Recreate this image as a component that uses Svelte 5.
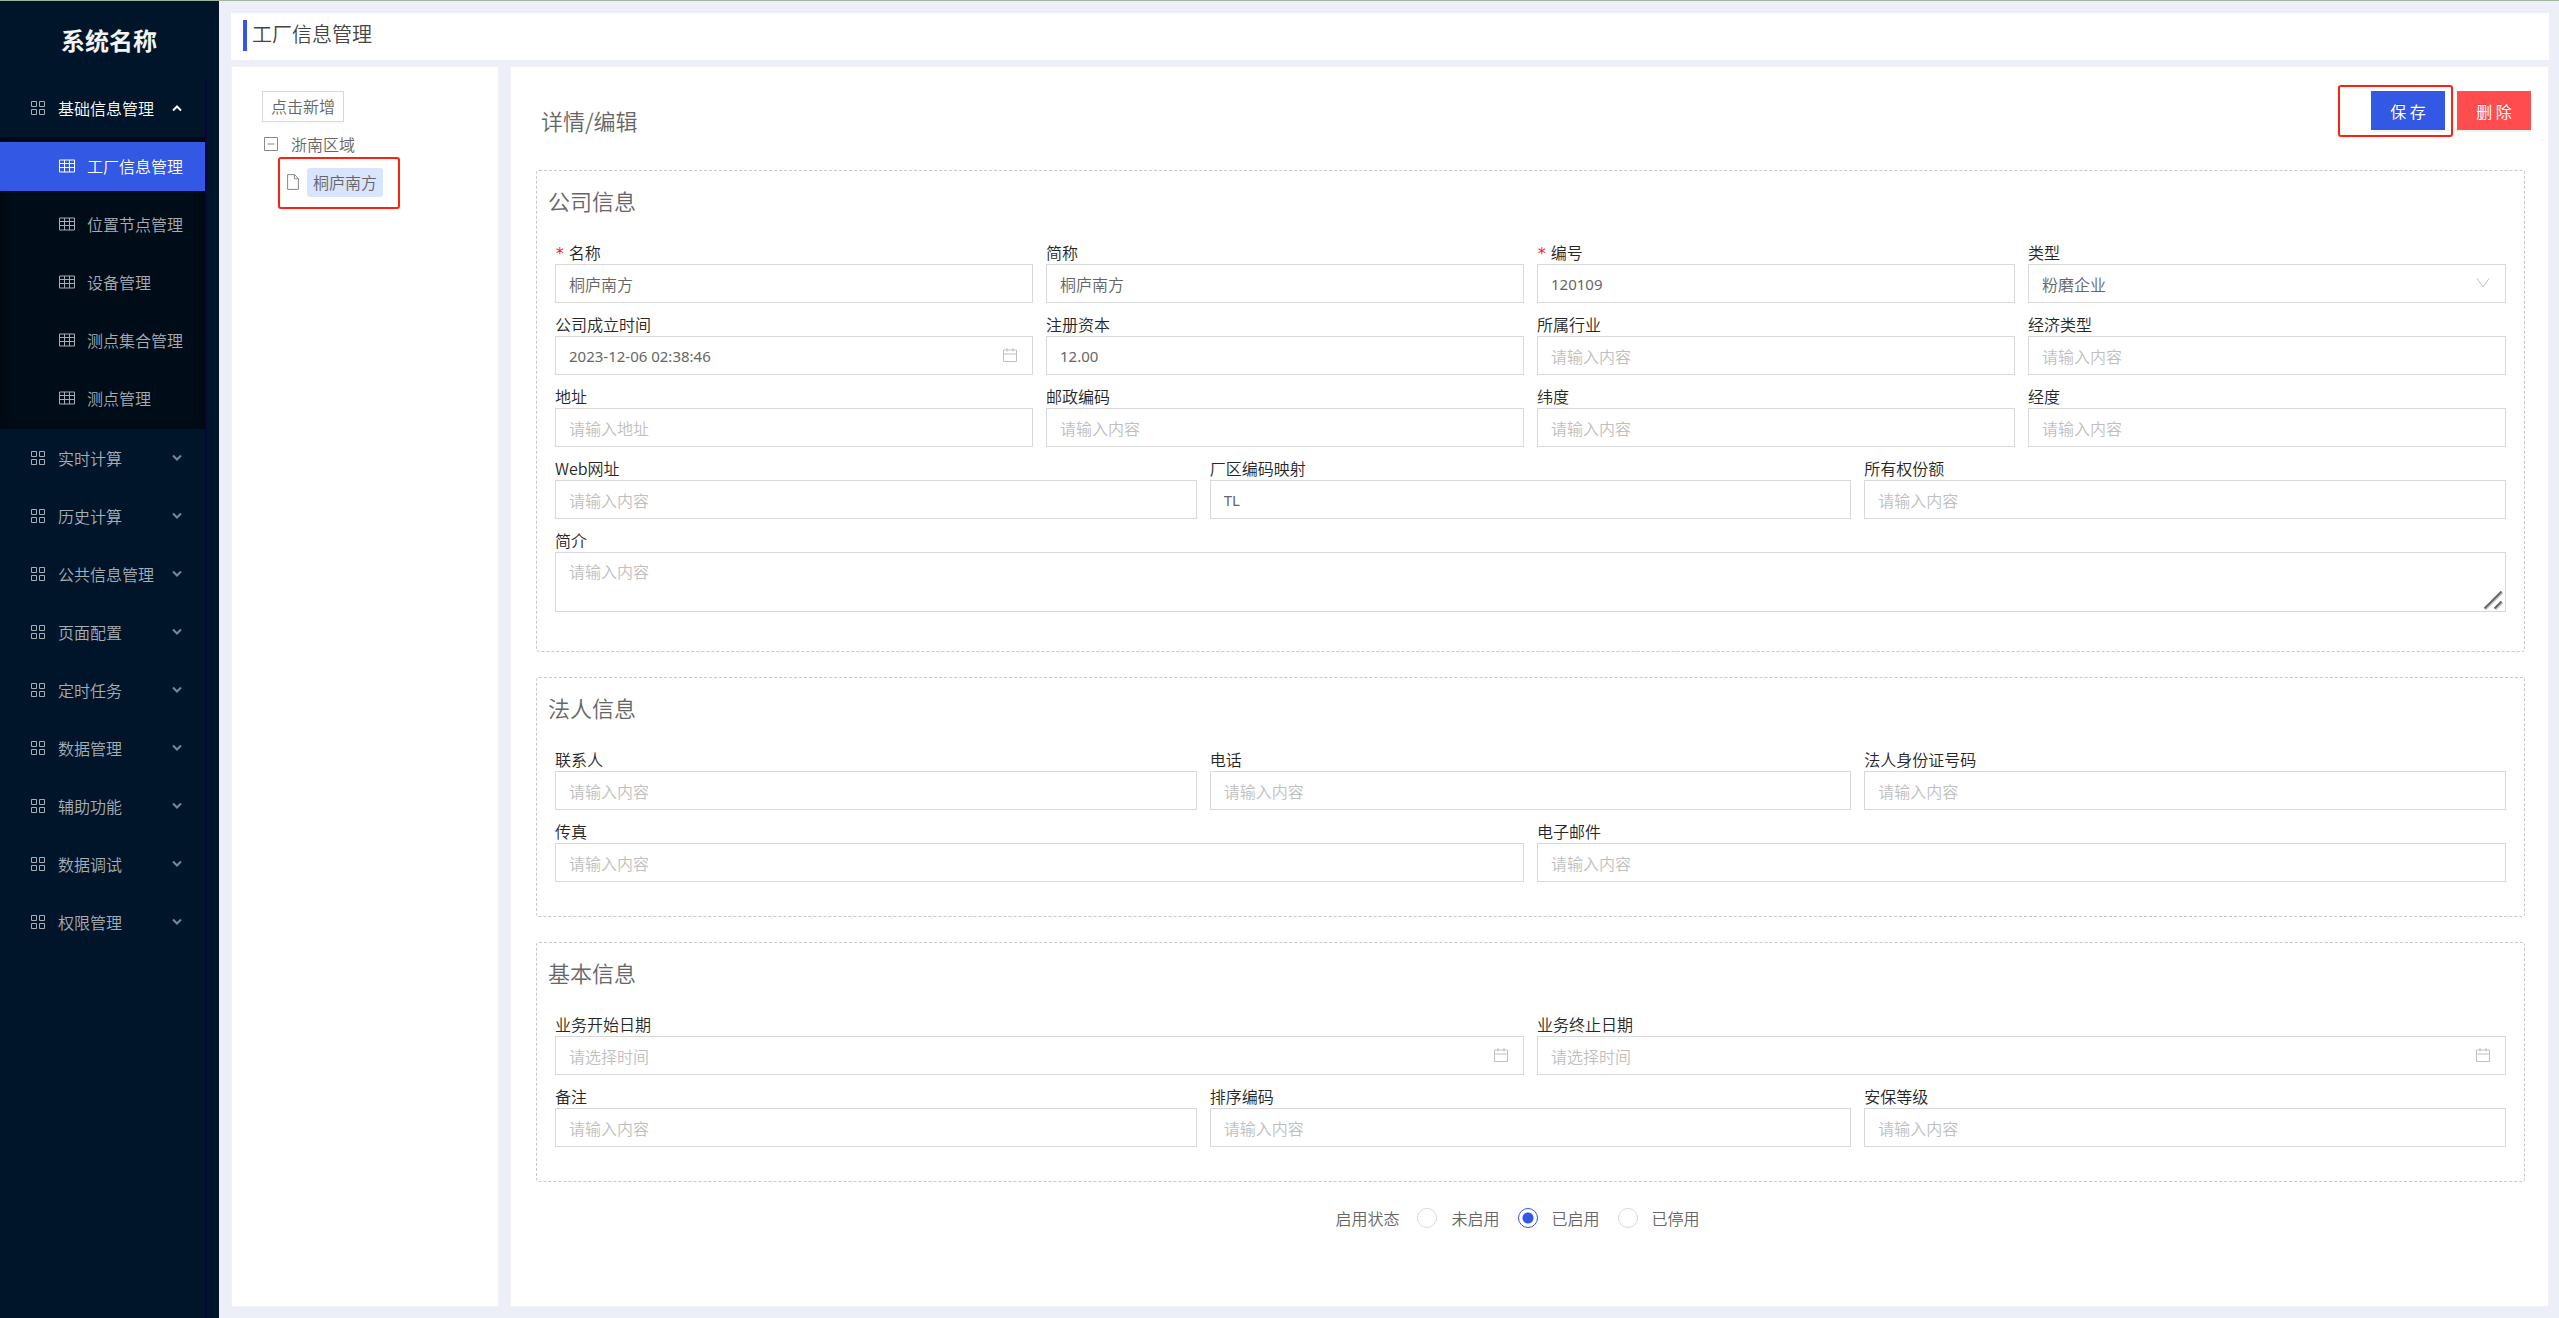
<script lang="ts">
  type Field = {
    id: string;
    label: string;
    span: number;
    kind?: "text" | "date" | "select" | "area";
    value?: string;
    placeholder?: string;
    required?: boolean;
  };

  const INPUT_HINT = "请输入内容";
  const DATE_HINT = "请选择时间";

  const subItems = ["工厂信息管理", "位置节点管理", "设备管理", "测点集合管理", "测点管理"];
  const groups = [
    "实时计算",
    "历史计算",
    "公共信息管理",
    "页面配置",
    "定时任务",
    "数据管理",
    "辅助功能",
    "数据调试",
    "权限管理",
  ];

  // span counts columns of a 12 column grid
  const sections: { title: string; fields: Field[] }[] = [
    {
      title: "公司信息",
      fields: [
        { id: "name", label: "名称", span: 3, value: "桐庐南方", required: true },
        { id: "short-name", label: "简称", span: 3, value: "桐庐南方" },
        { id: "code", label: "编号", span: 3, value: "120109", required: true },
        { id: "type", label: "类型", span: 3, kind: "select", value: "粉磨企业" },
        { id: "founded", label: "公司成立时间", span: 3, kind: "date", value: "2023-12-06 02:38:46" },
        { id: "capital", label: "注册资本", span: 3, value: "12.00" },
        { id: "industry", label: "所属行业", span: 3 },
        { id: "economy", label: "经济类型", span: 3 },
        { id: "address", label: "地址", span: 3, placeholder: "请输入地址" },
        { id: "postcode", label: "邮政编码", span: 3 },
        { id: "latitude", label: "纬度", span: 3 },
        { id: "longitude", label: "经度", span: 3 },
        { id: "web", label: "Web网址", span: 4 },
        { id: "area-code", label: "厂区编码映射", span: 4, value: "TL" },
        { id: "share", label: "所有权份额", span: 4 },
        { id: "intro", label: "简介", span: 12, kind: "area" },
      ],
    },
    {
      title: "法人信息",
      fields: [
        { id: "contact", label: "联系人", span: 4 },
        { id: "phone", label: "电话", span: 4 },
        { id: "id-number", label: "法人身份证号码", span: 4 },
        { id: "fax", label: "传真", span: 6 },
        { id: "email", label: "电子邮件", span: 6 },
      ],
    },
    {
      title: "基本信息",
      fields: [
        { id: "start", label: "业务开始日期", span: 6, kind: "date" },
        { id: "end", label: "业务终止日期", span: 6, kind: "date" },
        { id: "remark", label: "备注", span: 4 },
        { id: "order", label: "排序编码", span: 4 },
        { id: "security", label: "安保等级", span: 4 },
      ],
    },
  ];

  const states = ["未启用", "已启用", "已停用"];
  let active = $state("工厂信息管理");
  let status = $state("已启用");

  const isLatin = (text = "") => /^[\x20-\x7e]+$/.test(text);
</script>

{#snippet gridIcon()}
  <svg class="icon" width="14" height="14" viewBox="0 0 14 14" aria-hidden="true">
    <path d="M.5.5h5v5h-5zM8.5.5h5v5h-5zM.5 8.5h5v5h-5zM8.5 8.5h5v5h-5z" />
  </svg>
{/snippet}

{#snippet tableIcon()}
  <svg class="icon" width="16" height="14" viewBox="0 0 16 14" aria-hidden="true">
    <path d="M.5 1h15v12H.5zM.5 4.5h15M.5 8.5h15M5.5 1v12M10.5 1v12" />
  </svg>
{/snippet}

{#snippet chevron(up: boolean)}
  <svg class="chevron" class:up width="10" height="8" viewBox="0 0 10 8" aria-hidden="true">
    <path d="M1 1.5l4 4 4-4" />
  </svg>
{/snippet}

<div class="app">
  <aside class="sidebar">
    <h1 class="brand">系统名称</h1>
    <nav class="menu">
      <button type="button" class="group open">
        {@render gridIcon()}
        <span>基础信息管理</span>
        {@render chevron(true)}
      </button>
      <ul class="submenu">
        {#each subItems as item}
          <li>
            <a href="#{item}" class:active={active === item} onclick={() => (active = item)}>
              {@render tableIcon()}
              <span>{item}</span>
            </a>
          </li>
        {/each}
      </ul>
      {#each groups as group}
        <button type="button" class="group">
          {@render gridIcon()}
          <span>{group}</span>
          {@render chevron(false)}
        </button>
      {/each}
    </nav>
  </aside>

  <main class="page">
    <header class="page-header">
      <h2>工厂信息管理</h2>
    </header>

    <div class="columns">
      <section class="panel tree">
        <button type="button" class="add">点击新增</button>
        <ul>
          <li class="node">
            <svg width="14" height="14" viewBox="0 0 14 14" aria-hidden="true">
              <path d="M.5.5h13v13H.5zM3.5 7h7" />
            </svg>
            <span>浙南区域</span>
          </li>
          <li class="node child">
            <div class="marked">
              <svg width="12" height="16" viewBox="0 0 12 16" aria-hidden="true">
                <path d="M.6.6h7l3.8 4v10.8H.6zM7.4.6v4.2h4" />
              </svg>
              <a href="#tonglu" class="leaf">桐庐南方</a>
            </div>
          </li>
        </ul>
      </section>

      <section class="panel detail">
        <div class="detail-head">
          <h3>详情/编辑</h3>
          <div class="actions">
            <div class="marked save">
              <button type="submit" form="factory" class="primary">保 存</button>
            </div>
            <button type="button" class="danger">删 除</button>
          </div>
        </div>

        <form id="factory" onsubmit={(e) => e.preventDefault()}>
          {#each sections as section}
            <fieldset>
              <h4>{section.title}</h4>
              <div class="fields">
                {#each section.fields as field}
                  <div class="field span-{field.span}">
                    <label for={field.id}>
                      {#if field.required}<span class="star">*</span>{/if}{field.label}
                    </label>
                    {#if field.kind === "select"}
                      <div class="control">
                        <select id={field.id}>
                          <option>{field.value}</option>
                        </select>
                        <svg class="suffix" width="14" height="14" viewBox="0 0 14 14" aria-hidden="true">
                          <path d="M1 2.5l6 8.5 6-8.5" />
                        </svg>
                      </div>
                    {:else if field.kind === "area"}
                      <div class="control area">
                        <textarea id={field.id} placeholder={INPUT_HINT}></textarea>
                        <svg class="grip" width="20" height="20" viewBox="0 0 20 20" aria-hidden="true">
                          <path class="shade" d="M2.5 19.5l17-17M12.5 19.5l7-7" />
                          <path d="M1.5 18.5l17-17M11.5 18.5l7-7" />
                        </svg>
                      </div>
                    {:else if field.kind === "date"}
                      <div class="control">
                        <input
                          id={field.id}
                          type="text"
                          class:latin={isLatin(field.value)}
                          value={field.value ?? ""}
                          placeholder={DATE_HINT}
                        />
                        <svg class="suffix" width="14" height="14" viewBox="0 0 14 14" aria-hidden="true">
                          <path d="M.5 2h13v11.5H.5zM.5 6h13M4 0v3.5M10 0v3.5" />
                        </svg>
                      </div>
                    {:else}
                      <input
                        id={field.id}
                        type="text"
                        class:latin={isLatin(field.value)}
                        value={field.value ?? ""}
                        placeholder={field.placeholder ?? INPUT_HINT}
                      />
                    {/if}
                  </div>
                {/each}
              </div>
            </fieldset>
          {/each}

          <div class="status" role="radiogroup" aria-labelledby="status-label">
            <span id="status-label">启用状态</span>
            {#each states as state}
              <label>
                <input type="radio" name="status" value={state} bind:group={status} />
                {state}
              </label>
            {/each}
          </div>
        </form>
      </section>
    </div>
  </main>
</div>

<style>
  :global(body) {
    margin: 0;
    background: #eceff8;
  }

  .app {
    --primary: #3358e4;
    --mark: #ff2012;
    --text: #666;
    --line: #d9d9d9;
    box-sizing: border-box;
    display: flex;
    min-height: 100vh;
    border-top: 1px solid #9fb5a0;
    color: var(--text);
    font-family: "Noto Sans CJK SC", sans-serif;
    font-size: 16px;
    font-weight: 350;
    line-height: 22px;
  }

  .app *,
  .app *::after {
    box-sizing: border-box;
  }

  h1,
  h2,
  h3,
  h4,
  ul {
    margin: 0;
    padding: 0;
    font-weight: inherit;
    list-style: none;
  }

  button,
  input,
  select,
  textarea {
    font: inherit;
    color: inherit;
  }

  button {
    cursor: pointer;
  }

  a {
    color: inherit;
    text-decoration: none;
  }

  svg {
    flex: none;
    fill: none;
    stroke: currentColor;
  }

  /* Sidebar */
  .sidebar {
    display: flex;
    flex: 0 0 219px;
    flex-direction: column;
    padding-right: 12px;
    background: #001529;
    color: #a6adb4;
  }

  .brand {
    padding-left: 11px;
    color: #f2f4f5;
    font-size: 24px;
    font-weight: 700;
    line-height: 78px;
    text-align: center;
  }

  .menu {
    flex: 1;
    border-right: 2px solid #080538;
  }

  .group {
    display: flex;
    align-items: center;
    gap: 13px;
    width: 100%;
    height: 50px;
    margin: 4px 0;
    padding: 0 23px 0 31px;
    border: 0;
    background: none;
  }

  .group + .group {
    margin-top: 8px;
  }

  .group.open {
    color: #fff;
  }

  .group.open .icon {
    color: #a6adb4;
  }

  .chevron {
    margin-left: auto;
    stroke-width: 2;
    opacity: 0.75;
  }

  .chevron.up {
    opacity: 1;
    transform: rotate(180deg);
  }

  .submenu {
    padding: 1px 0;
    background: #000c17;
    box-shadow: inset 0 2px 8px rgba(0, 0, 0, 0.45);
  }

  .submenu a {
    display: flex;
    align-items: center;
    gap: 12px;
    height: 49px;
    padding: 0 0 2px 59px;
  }

  .submenu li {
    padding: 4px 0 5px;
  }

  .submenu .active {
    background: var(--primary);
    color: #fff;
  }

  /* Page */
  .page {
    display: flex;
    flex: 1;
    flex-direction: column;
    gap: 6px;
    min-width: 0;
    padding: 12px 10px 11px 12px;
  }

  .page-header {
    display: flex;
    align-items: center;
    height: 47px;
    padding: 0 12px 2px;
    background: #fff;
  }

  .page-header h2 {
    padding: 0 0 3px 5px;
    border-left: 4px solid var(--primary);
    color: #444;
    font-size: 20px;
    line-height: 28px;
  }

  .columns {
    display: flex;
    flex: 1;
    gap: 11px;
  }

  .panel {
    border: 1px solid #f2f2f4;
    background: #fff;
  }

  .tree {
    flex: 0 0 268px;
    padding: 24px 30px;
  }

  .add {
    display: block;
    height: 31px;
    margin-bottom: 3px;
    padding: 0 8px 2px;
    border: 1px solid var(--line);
    background: #fff;
    line-height: 26px;
    box-shadow: 0 2px 0 rgba(0, 0, 0, 0.02);
  }

  .node {
    display: flex;
    align-items: center;
    gap: 13px;
    height: 38px;
    padding-left: 2px;
  }

  .node svg {
    color: #888;
  }

  .node.child {
    padding-left: 25px;
  }

  /* Red frame that calls out a control */
  .marked {
    position: relative;
    display: flex;
    align-items: center;
  }

  .marked::after {
    content: "";
    position: absolute;
    inset: -11px -17px -12px -9px;
    border: 2px solid var(--mark);
    border-radius: 3px;
    pointer-events: none;
  }

  .marked.save::after {
    inset: -6px -8px -7px -33px;
  }

  .leaf {
    margin-left: 8px;
    padding: 3px 6px 4px;
    border-radius: 3px;
    background: #d9e5ff;
  }

  /* Detail */
  .detail {
    flex: 1;
    min-width: 0;
  }

  .detail-head {
    display: flex;
    justify-content: space-between;
    height: 103px;
    padding: 24px 17px 0 30px;
  }

  .detail-head h3 {
    font-size: 22px;
    line-height: 58px;
  }

  .actions {
    display: flex;
    align-items: flex-start;
    gap: 12px;
  }

  .actions button {
    width: 74px;
    height: 39px;
    padding: 0;
    border: 0;
    color: #fff;
    font-weight: 400;
    text-shadow: 0 -1px 0 rgba(0, 0, 0, 0.12);
    box-shadow: 0 2px 0 rgba(0, 0, 0, 0.04);
  }

  .actions .primary {
    background: var(--primary);
  }

  .actions .danger {
    background: #ff4d4f;
  }

  form {
    padding: 0 23px 0 25px;
  }

  fieldset {
    min-width: 0;
    margin: 0 0 25px;
    padding: 13px 18px 34px;
    border: 1px dashed #c8c8c8;
    border-radius: 3px;
  }

  h4 {
    margin: 0 -6px 25px -7px;
    font-size: 22px;
    line-height: 32px;
  }

  .fields {
    display: grid;
    grid-template-columns: repeat(12, 1fr);
    gap: 11px 13px;
  }

  .field {
    min-width: 0;
  }

  .span-3 {
    grid-column: span 3;
  }

  .span-4 {
    grid-column: span 4;
  }

  .span-6 {
    grid-column: span 6;
  }

  .span-12 {
    grid-column: span 12;
  }

  .field label {
    display: block;
    height: 23px;
    color: #262626;
  }

  .fields {
    row-gap: 10px;
  }

  .star {
    margin-right: 4px;
    color: #f5222d;
    font-family: "DejaVu Sans Mono", monospace;
    font-size: 16px;
    line-height: 16px;
  }

  .field input,
  .field select,
  .field textarea {
    display: block;
    width: 100%;
    height: 39px;
    padding: 0 13px;
    border: 1px solid var(--line);
    border-radius: 0;
    outline: 0;
    background: #fff;
    appearance: none;
  }

  .field .latin {
    font-family: "Noto Sans", sans-serif;
    font-size: 15px;
    font-weight: 400;
  }

  .field ::placeholder {
    color: #bfbfbf;
    opacity: 1;
  }

  .control {
    position: relative;
  }

  .suffix {
    position: absolute;
    top: 12px;
    right: 16px;
    color: #bfbfbf;
    pointer-events: none;
  }

  .area {
    margin-bottom: 5px;
  }

  .field textarea {
    height: 60px;
    padding-top: 7px;
    resize: none;
  }

  .grip {
    position: absolute;
    right: 3px;
    bottom: 2px;
    color: #66666a;
    stroke-width: 2;
    pointer-events: none;
  }

  .grip .shade {
    stroke: #c8c8c8;
  }

  .status {
    display: flex;
    align-items: center;
    justify-content: center;
    gap: 18px;
    padding-right: 26px;
  }

  .status label {
    display: flex;
    align-items: center;
    gap: 14px;
  }

  .status input {
    width: 20px;
    height: 20px;
    margin: 0;
    border: 1px solid var(--line);
    border-radius: 50%;
    appearance: none;
  }

  .status input:checked {
    border-color: var(--primary);
    background: radial-gradient(circle, var(--primary) 5px, #fff 6px);
  }
</style>
